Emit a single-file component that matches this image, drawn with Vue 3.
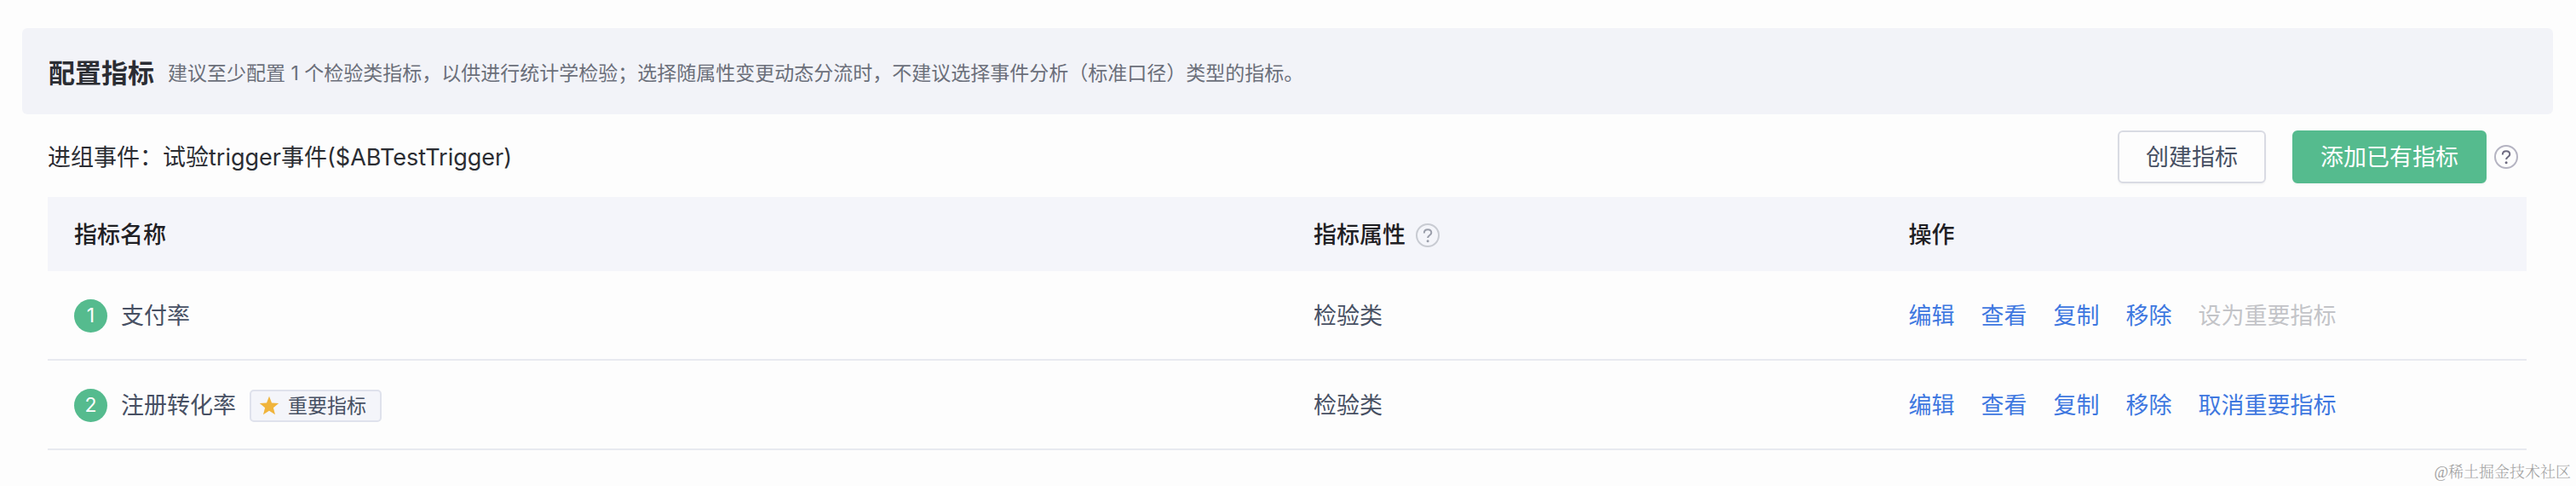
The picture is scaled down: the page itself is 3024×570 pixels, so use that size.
<script setup>
const title = '配置指标'
const hint =
  '建议至少配置 1 个检验类指标，以供进行统计学检验；选择随属性变更动态分流时，不建议选择事件分析（标准口径）类型的指标。'
const commonActions = ['编辑', '查看', '复制', '移除']
const metrics = [
  { id: 1, name: '支付率', kind: '检验类', important: false, toggle: '设为重要指标', locked: true },
  { id: 2, name: '注册转化率', kind: '检验类', important: true, toggle: '取消重要指标', locked: false },
]
</script>

<template>
  <main class="page">
    <header class="banner">
      <h1 class="title">{{ title }}</h1>
      <p class="hint">{{ hint }}</p>
    </header>

    <section class="content">
      <div class="toolbar">
        <p class="event">进组事件：试验trigger事件($ABTestTrigger)</p>
        <div class="buttons">
          <button type="button" class="btn">创建指标</button>
          <button type="button" class="btn primary">添加已有指标</button>
          <button type="button" class="help dark" aria-label="帮助">
            <svg viewBox="0 0 28 28" fill="none">
              <circle class="ring" cx="14" cy="14" r="13" stroke-width="2" />
              <path class="mark" d="M9.8 11.4c0-2.500 1.800-4.200 4.300-4.200s4.200 1.600 4.200 3.800c0 3-4.200 3-4.200 6" stroke-width="2" />
              <circle class="dot" cx="14.1" cy="20.8" r="1.5" />
            </svg>
          </button>
        </div>
      </div>

      <table class="table">
        <colgroup>
          <col class="col-name" />
          <col class="col-kind" />
          <col />
        </colgroup>
        <thead>
          <tr>
            <th scope="col">指标名称</th>
            <th scope="col">
              <div class="cell">
                指标属性
                <button type="button" class="help" aria-label="指标属性说明">
                  <svg viewBox="0 0 28 28" fill="none">
                    <circle class="ring" cx="14" cy="14" r="13" stroke-width="2" />
                    <path class="mark" d="M9.8 11.4c0-2.500 1.800-4.200 4.300-4.200s4.200 1.600 4.200 3.800c0 3-4.200 3-4.200 6" stroke-width="2" />
                    <circle class="dot" cx="14.1" cy="20.8" r="1.5" />
                  </svg>
                </button>
              </div>
            </th>
            <th scope="col">操作</th>
          </tr>
        </thead>
        <tbody>
          <tr v-for="metric in metrics" :key="metric.id">
            <td>
              <div class="cell name">
                <span class="index">{{ metric.id }}</span>
                <span>{{ metric.name }}</span>
                <span v-if="metric.important" class="tag">
                  <svg class="star" viewBox="0 0 24 24" aria-hidden="true">
                    <path d="M12 .8l3 7.600 8.200.6-6.300 5.200 2.100 8-7-4.400-7 4.400 2.100-8L.8 9l8.200-.6z" />
                  </svg>
                  重要指标
                </span>
              </div>
            </td>
            <td>{{ metric.kind }}</td>
            <td>
              <div class="cell actions">
                <a v-for="action in commonActions" :key="action" href="#" class="link">{{ action }}</a>
                <button v-if="metric.locked" type="button" class="link" disabled>{{ metric.toggle }}</button>
                <a v-else href="#" class="link">{{ metric.toggle }}</a>
              </div>
            </td>
          </tr>
        </tbody>
      </table>
    </section>

    <footer class="credit">@稀土掘金技术社区</footer>
  </main>
</template>

<style>
body {
  background: #fdfdfd;
}
</style>

<style scoped>
.page {
  padding-top: 33px;
  font-family: Inter, "Noto Sans CJK SC", sans-serif;
  font-size: 27px;
  line-height: 40px;
  color: #475063;
}

.banner {
  display: flex;
  align-items: center;
  gap: 16px;
  margin: 0 27px 0 26px;
  padding: 30px 31px 26px;
  border-radius: 6px;
  background: #f2f3f8;
}

.title,
.hint,
.event {
  margin: 0;
}

.title {
  font-size: 31px;
  line-height: 45px;
  font-weight: 700;
  color: #2b2d33;
  white-space: nowrap;
}

.hint {
  font-size: 23px;
  line-height: 40px;
  color: #6b6f7a;
}

.content {
  margin: 0 58px 0 56px;
}

.toolbar {
  display: flex;
  align-items: center;
  justify-content: space-between;
  padding: 19px 10px 16px 0;
}

.event {
  padding-top: 2px;
  color: #2b2d33;
}

.buttons {
  display: flex;
  align-items: center;
}

.btn {
  box-sizing: border-box;
  padding: 10px 31px 8px;
  border: 2px solid #d9dbe3;
  border-radius: 6px;
  background: #fdfdfd;
  font: inherit;
  color: #475063;
  box-shadow: 0 2px 2px rgba(0, 0, 0, 0.03);
  cursor: pointer;
}

.btn.primary {
  margin: 0 9px 0 31px;
  border-color: #55bb8e;
  background: #55bb8e;
  color: #fff;
}

.help {
  width: 28px;
  height: 28px;
  padding: 0;
  border: 0;
  background: none;
  cursor: pointer;
}

.help svg {
  display: block;
}

.ring {
  stroke: #c8cbd2;
}

.mark {
  stroke: #9a9eaa;
}

.dot {
  fill: #9a9eaa;
}

.dark .ring {
  stroke: #b5b4c2;
}

.dark .mark {
  stroke: #6d6a80;
}

.dark .dot {
  fill: #6d6a80;
}

.table {
  width: 100%;
  table-layout: fixed;
  border-collapse: separate;
  border-spacing: 0;
}

.col-name {
  width: 50%;
}

.col-kind {
  width: 24%;
}

th,
td {
  box-sizing: border-box;
  padding: 2px 31px 0;
  text-align: left;
}

th {
  height: 87px;
  background: #f4f5fa;
  font-weight: 500;
  color: #1f2024;
}

td {
  height: 105px;
  border-bottom: 2px solid #e8eaf0;
}

.cell {
  display: flex;
  align-items: center;
  gap: 12px;
}

.name {
  gap: 16px;
}

.index {
  width: 39px;
  border-radius: 50%;
  background: #55bb8e;
  font-size: 23px;
  line-height: 39px;
  text-align: center;
  color: #fff;
}

.tag {
  display: flex;
  align-items: center;
  gap: 10px;
  padding: 0 16px 0 9px;
  border: 2px solid #dfe2ec;
  border-radius: 5px;
  background: #f4f5fa;
  font-size: 23px;
  line-height: 34px;
}

.star {
  width: 24px;
  height: 24px;
  fill: #f0b43c;
}

.actions {
  gap: 31px;
}

.link {
  padding: 0;
  border: 0;
  background: none;
  font: inherit;
  color: #3f78e0;
  text-decoration: none;
}

.link:disabled {
  color: #c3c4c8;
}

.credit {
  padding: 14px 6px 0 0;
  font-family: "Liberation Serif", "Noto Serif CJK SC", "Noto Sans CJK SC", serif;
  font-size: 18px;
  font-weight: 300;
  line-height: 24px;
  text-align: right;
  color: #a0a0a0;
}
</style>
